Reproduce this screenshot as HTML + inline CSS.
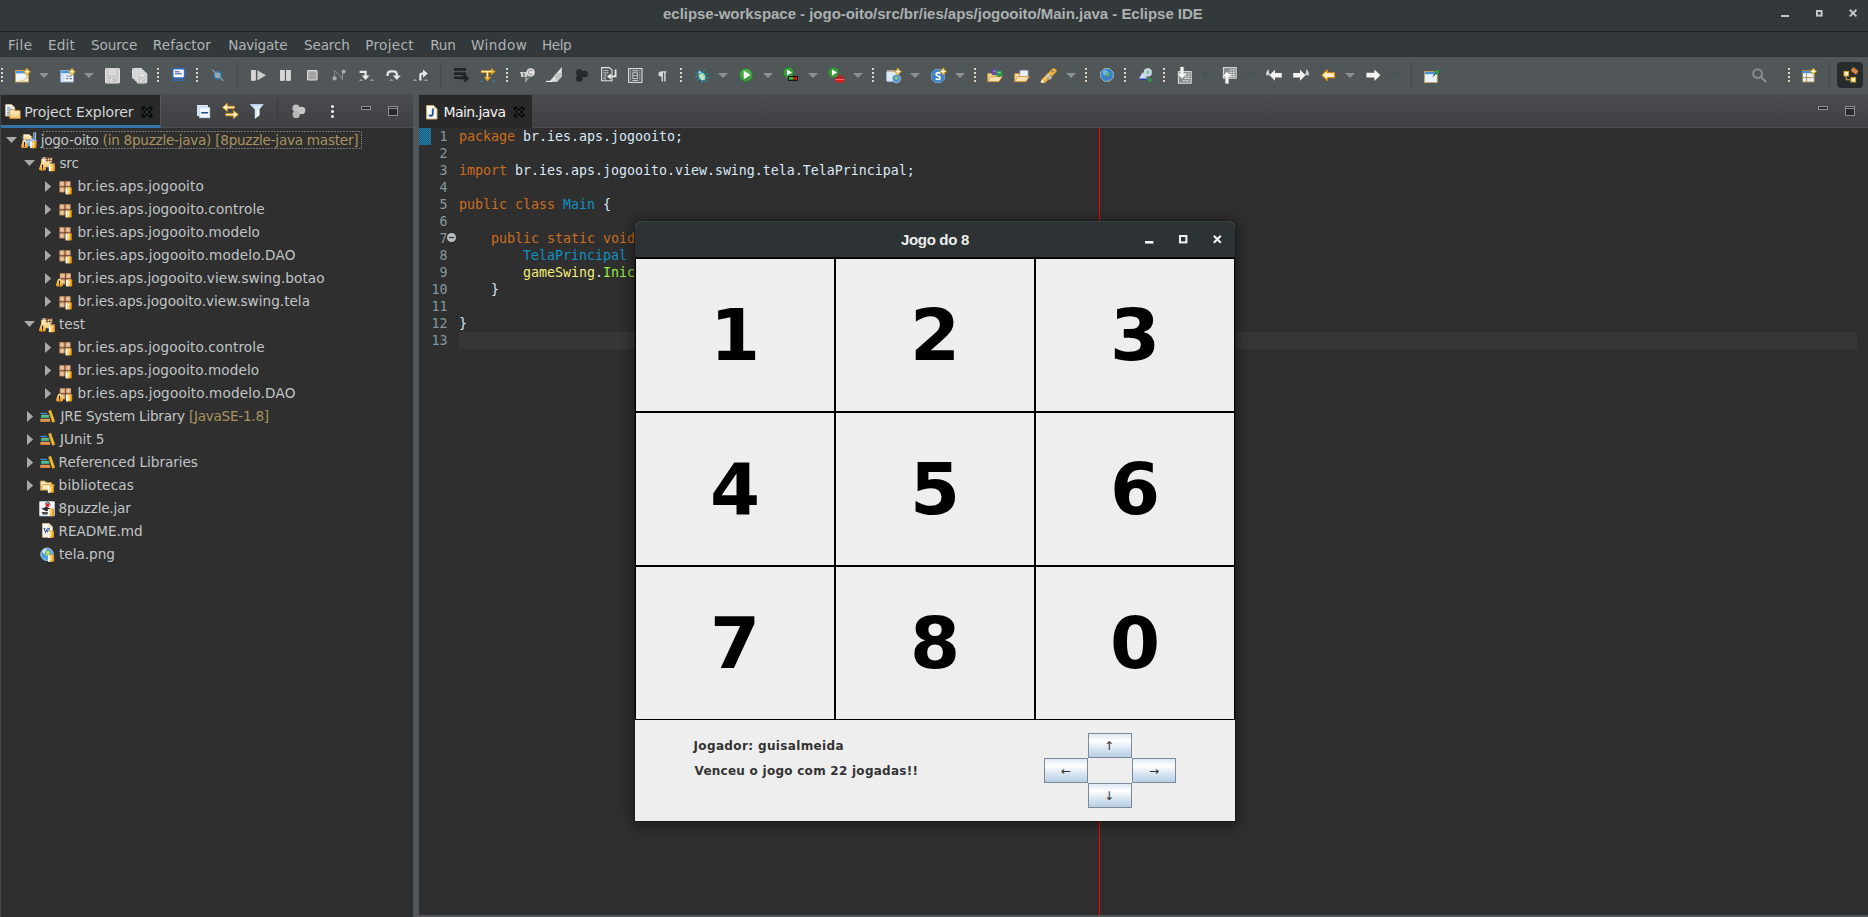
<!DOCTYPE html>
<html lang="pt-BR"><head><meta charset="utf-8">
<title>eclipse-workspace - jogo-oito/src/br/ies/aps/jogooito/Main.java - Eclipse IDE</title>
<style>
html,body{margin:0;padding:0}
body{width:1868px;height:917px;position:relative;overflow:hidden;background:#2f2f2f;font-family:"DejaVu Sans","Liberation Sans",sans-serif;font-size:13.6px;color:#c1c5c7}
div,span,svg,pre{position:absolute;box-sizing:border-box}
span.t{white-space:pre}
svg.ic{overflow:visible}
#titlebar{left:0;top:0;width:1868px;height:31px;background:#33383b}
#titlebar .title{top:0;height:29px;line-height:28px;font-family:"Liberation Sans","DejaVu Sans",sans-serif;font-weight:bold;font-size:15px;color:#abb0b0}
#tline{left:0;top:31px;width:1868px;height:1px;background:#1f2325}
#menubar{left:0;top:32px;width:1868px;height:25px;background:#33383b;border-bottom:1px solid #2f3437}
#menubar span{top:1px;height:25px;line-height:25px;color:#afb3b5;white-space:pre}
#toolbar{left:0;top:57px;width:1868px;height:38px;background:#515658}
#toolbar svg.ic{margin-top:-57px}
#left{left:0;top:95px;width:413px;height:822px;background:#2f2f2f}
#left .tabbar,#editor .tabbar{left:0;top:0;width:100%;height:32px;background:linear-gradient(#4a4c50,#3e4042)}
.tabline{left:0;top:32px;width:100%;height:1px;background:#4a4c4f}
.tab{top:0;height:33px;background:#292929}
.tab span{top:1px;line-height:32px;height:32px;white-space:pre}
#sash{left:413px;top:95px;width:6px;height:822px;background:#515658}
#editor{left:419px;top:95px;width:1449px;height:820px;background:#2f2f2f}
#ebottom{left:419px;top:915px;width:1449px;height:2px;background:#515658}
.row{left:0;width:413px;height:23px;line-height:23px}
.row span{top:0;height:23px;line-height:23px;white-space:pre;color:#c1c5c7}
.row span.d{color:#a8935f;position:static}
.code{left:40px;top:33px;font-family:"DejaVu Sans Mono","Liberation Mono",monospace;font-size:13.29px;line-height:17px;white-space:pre;color:#d9e8f7;margin:0}
.ln{left:0;top:33px;width:28.5px;text-align:right;font-family:"DejaVu Sans Mono","Liberation Mono",monospace;font-size:13.29px;line-height:17px;white-space:pre;color:#8497a1;margin:0}
.k{color:#cc6c1d;position:static}.c{color:#1290c3;position:static}.v{color:#f3ec79;position:static}.m{color:#96ec3f;position:static}
#game{left:635px;top:221px;width:600px;height:600px;background:#eeeeee;border-radius:7px 7px 0 0;box-shadow:0 2px 14px 3px rgba(0,0,0,.42),0 0 0 1px rgba(20,20,20,.35)}
#gtitle{left:0;top:0;width:600px;height:37px;background:#2d3235;border-radius:7px 7px 0 0;border-bottom:1px solid #0c0d0e;box-shadow:inset 0 1px 0 #3b4144}
#gtitle span{top:1px;height:36px;line-height:36px;font-family:"Liberation Sans","DejaVu Sans",sans-serif;font-weight:bold;font-size:15px;color:#eceeee}
.cell{width:200px;height:154px;border:1px solid #000;background:#eeeeee;color:#000;font-family:"DejaVu Sans",sans-serif;font-weight:bold;font-size:72px;text-align:center;line-height:152px}
.gl{font-family:"DejaVu Sans",sans-serif;font-weight:bold;font-size:12px;color:#333;white-space:pre;line-height:15px;height:15px}
.btn{width:44px;height:25px;border:1px solid #7a8a99;background:linear-gradient(#dde8f3 0%,#ffffff 30%,#dde8f3 60%,#b8cfe5 100%);font-family:"DejaVu Sans",sans-serif;font-weight:normal;font-size:12px;color:#333;text-align:center;line-height:23px}
</style></head><body>

<svg width="0" height="0" style="position:absolute;left:0;top:0"><defs><linearGradient id="gW" x1="0" y1="0" x2="0" y2="1"><stop offset="0" stop-color="#ffe999"/><stop offset="1" stop-color="#eb9a12"/></linearGradient><linearGradient id="gR" x1="0" y1="0" x2="1" y2="0"><stop offset="0" stop-color="#ffd257"/><stop offset="1" stop-color="#e48a00"/></linearGradient><radialGradient id="gP" cx=".5" cy=".5" r=".7"><stop offset="0" stop-color="#f6d9ad"/><stop offset="1" stop-color="#c5855a"/></radialGradient><linearGradient id="gF" x1="0" y1="0" x2="0" y2="1"><stop offset="0" stop-color="#fff4cf"/><stop offset="1" stop-color="#f1c970"/></linearGradient><linearGradient id="gB" x1="0" y1="0" x2="0" y2="1"><stop offset="0" stop-color="#bcd6f7"/><stop offset="1" stop-color="#5f8fdc"/></linearGradient></defs></svg>
<div id="titlebar"><span id="title" class="title t" style="left:663.0px;letter-spacing:-0.026px;">eclipse-workspace - jogo-oito/src/br/ies/aps/jogooito/Main.java - Eclipse IDE</span>
<svg class="ic" style="left:1781px;top:15px" width="8" height="2"><rect width="8" height="2" fill="#c3c6c7"/></svg>
<svg class="ic" style="left:1816px;top:10px" width="7" height="7"><rect x="1" y="1" width="4.6" height="4.6" fill="none" stroke="#c3c6c7" stroke-width="2"/></svg>
<svg class="ic" style="left:1849px;top:9px" width="8" height="8"><path d="M.8 .8L7.4 7.4M7.4 .8L.8 7.4" stroke="#c3c6c7" stroke-width="2"/></svg>
</div><div id="tline"></div>
<div id="menubar">
<span id="m_File" class="t" style="left:7.9px;letter-spacing:0.467px;">File</span>
<span id="m_Edit" class="t" style="left:48.0px;letter-spacing:0.2px;">Edit</span>
<span id="m_Source" class="t" style="left:91.0px;letter-spacing:-0.08px;">Source</span>
<span id="m_Refactor" class="t" style="left:152.8px;letter-spacing:0.143px;">Refactor</span>
<span id="m_Navigate" class="t" style="left:228.2px;letter-spacing:-0.229px;">Navigate</span>
<span id="m_Search" class="t" style="left:304.0px;letter-spacing:-0.16px;">Search</span>
<span id="m_Project" class="t" style="left:365.2px;letter-spacing:0.3px;">Project</span>
<span id="m_Run" class="t" style="left:430.2px;letter-spacing:-0.2px;">Run</span>
<span id="m_Window" class="t" style="left:471.0px;letter-spacing:0.44px;">Window</span>
<span id="m_Help" class="t" style="left:542.0px;letter-spacing:-0.467px;">Help</span>
</div>
<div id="toolbar">
<svg class="ic" style="left:1px;top:68px" width="2" height="14" viewBox="0 0 2 14"><rect x="0" y="0" width="2" height="2" fill="#ddd2c3"/><rect x="0" y="4" width="2" height="2" fill="#ddd2c3"/><rect x="0" y="8" width="2" height="2" fill="#ddd2c3"/><rect x="0" y="12" width="2" height="2" fill="#ddd2c3"/></svg><svg class="ic" style="left:15px;top:67.5px" width="16" height="16" viewBox="0 0 16 16"><rect x=".5" y="2.5" width="13" height="11.5" fill="#f0f6fd" stroke="#c8a24c"/><rect x="1" y="3" width="12" height="2.4" fill="#4a98e4"/><path d="M3 13.5C8 13.5 12 11 13 6.5" stroke="#e7cf8d" stroke-width="1.2" fill="none"/><path d="M12 0.0L13.7 2.0999999999999996L15.8 3.8L13.7 5.5L12 7.6L10.3 5.5L8.2 3.8L10.3 2.0999999999999996Z" fill="#d6a21c" stroke="#c08d12" stroke-width=".4"/><path d="M9.8 3.8H14.2M12 1.5999999999999996V6.0" stroke="#fffdf2" stroke-width="1.1" fill="none"/></svg><svg class="ic" style="left:39px;top:73px" width="10" height="5" viewBox="0 0 10 5"><path d="M0 0H10L5 5Z" fill="#8b9091"/></svg><svg class="ic" style="left:60px;top:67.5px" width="16" height="16" viewBox="0 0 16 16"><rect x=".5" y="2.5" width="13" height="11.5" fill="#f4f8fd" stroke="#8fa6c8"/><rect x="1" y="3" width="12" height="2.4" fill="#4a98e4"/><rect x="1" y="5.4" width="3.6" height="8.2" fill="#cfe2f7"/><path d="M6 8h6M6 10.6h2.4M9.6 10.6h2.4" stroke="#6a7fb2" stroke-width="1.1"/><path d="M12 0.0L13.7 2.0999999999999996L15.8 3.8L13.7 5.5L12 7.6L10.3 5.5L8.2 3.8L10.3 2.0999999999999996Z" fill="#d6a21c" stroke="#c08d12" stroke-width=".4"/><path d="M9.8 3.8H14.2M12 1.5999999999999996V6.0" stroke="#fffdf2" stroke-width="1.1" fill="none"/></svg><svg class="ic" style="left:84px;top:73px" width="10" height="5" viewBox="0 0 10 5"><path d="M0 0H10L5 5Z" fill="#8b9091"/></svg><svg class="ic" style="left:105px;top:68px" width="16" height="16" viewBox="0 0 16 16"><path d="M.5 1.2Q.5 .5 1.2 .5H13.8Q14.5 .5 14.5 1.2V14.3Q14.5 15 13.8 15H1.2Q.5 15 .5 14.3Z" fill="#cfcfcf" stroke="#e4e4e4"/><rect x="3.5" y="1" width="8" height="6" fill="#e6e6e6" stroke="#bdbdbd" stroke-width=".6"/><path d="M4.5 3h6M4.5 4.6h6" stroke="#c6c6c6" stroke-width=".7"/><rect x="4.5" y="10" width="6" height="5" fill="#dcdcdc" stroke="#b4b4b4" stroke-width=".6"/><rect x="7.8" y="11" width="1.6" height="3" fill="#b9b9b9"/></svg><svg class="ic" style="left:132px;top:68px" width="16" height="16" viewBox="0 0 16 16"><rect x=".5" y=".5" width="9.5" height="10" rx="1" fill="#cfcfcf" stroke="#e2e2e2"/><rect x="2.8" y="2.6" width="9.5" height="10" rx="1" fill="#cfcfcf" stroke="#e2e2e2"/><rect x="5" y="4.8" width="9.8" height="10.2" rx="1" fill="#cfcfcf" stroke="#e2e2e2"/><rect x="7" y="5.4" width="5.6" height="3.6" fill="#e4e4e4" stroke="#bdbdbd" stroke-width=".5"/><rect x="7.6" y="11" width="4.6" height="4" fill="#dcdcdc" stroke="#b4b4b4" stroke-width=".5"/><rect x="10" y="12" width="1.2" height="2.4" fill="#b9b9b9"/></svg><svg class="ic" style="left:157px;top:68px" width="2" height="14" viewBox="0 0 2 14"><rect x="0" y="0" width="2" height="2" fill="#ddd2c3"/><rect x="0" y="4" width="2" height="2" fill="#ddd2c3"/><rect x="0" y="8" width="2" height="2" fill="#ddd2c3"/><rect x="0" y="12" width="2" height="2" fill="#ddd2c3"/></svg><svg class="ic" style="left:172px;top:68px" width="14" height="14" viewBox="0 0 14 14"><rect x=".8" y=".8" width="11.8" height="9.2" rx="1.4" fill="#fbfcff" stroke="#2f6cc7" stroke-width="1.5"/><path d="M3 3.8h4.6M3 5.8h7" stroke="#31479c" stroke-width="1"/><path d="M3.5 10.4V12M9.8 10.4V12" stroke="#2f6cc7" stroke-width="1.4"/><path d="M1 12.3h11.4" stroke="#2f6cc7" stroke-width="1.1"/></svg><svg class="ic" style="left:196px;top:68px" width="2" height="14" viewBox="0 0 2 14"><rect x="0" y="0" width="2" height="2" fill="#ddd2c3"/><rect x="0" y="4" width="2" height="2" fill="#ddd2c3"/><rect x="0" y="8" width="2" height="2" fill="#ddd2c3"/><rect x="0" y="12" width="2" height="2" fill="#ddd2c3"/></svg><svg class="ic" style="left:211px;top:68px" width="14" height="14" viewBox="0 0 14 14"><circle cx="6.6" cy="7.3" r="3.5" fill="#9aa9b4" stroke="#2c7db9" stroke-width="1.5"/><path d="M1.2 1.6L12.4 12.8" stroke="#9b9fa1" stroke-width="1.1"/></svg><svg class="ic" style="left:237px;top:62px" width="1" height="26" viewBox="0 0 1 26"><rect width="1" height="26" fill="#44494b"/></svg><svg class="ic" style="left:251px;top:70px" width="15" height="11" viewBox="0 0 15 11"><rect x=".3" y=".3" width="4.2" height="10" fill="#d6d6d6" stroke="#e6e6e6" stroke-width=".6"/><path d="M6.4 .2L15 5.3L6.4 10.5Z" fill="#cdcdcd"/></svg><svg class="ic" style="left:280px;top:70px" width="11" height="11" viewBox="0 0 11 11"><rect x=".3" y=".3" width="4.2" height="10.2" fill="#d6d6d6" stroke="#e8e8e8" stroke-width=".6"/><rect x="6.3" y=".3" width="4.2" height="10.2" fill="#d6d6d6" stroke="#e8e8e8" stroke-width=".6"/></svg><svg class="ic" style="left:307px;top:70px" width="11" height="11" viewBox="0 0 11 11"><rect x=".6" y=".6" width="9.4" height="9.4" rx=".8" fill="#a4a4a4" stroke="#d9d9d9" stroke-width="1.2"/></svg><svg class="ic" style="left:332px;top:69px" width="14" height="12" viewBox="0 0 14 12"><path d="M2.5 1.5L8.5 7L10.5 10.5V3.5" stroke="#8f9495" stroke-width=".9" fill="none"/><path d="M2.6 2v6" stroke="#8f9495" stroke-width=".8"/><circle cx="2.6" cy="9.4" r="2.1" fill="#a6a9aa"/><circle cx="11.6" cy="2.6" r="2.1" fill="#a6a9aa"/></svg><svg class="ic" style="left:359px;top:69.7px" width="15" height="11" viewBox="0 0 15 11"><path d="M.6 1.8H6.6V6" stroke="#e6e6e6" stroke-width="2.2" fill="none"/><path d="M2.6 5.4H10.6L6.6 10Z" fill="#e6e6e6"/><path d="M0 10.6Q2 8.6 4 10.6ZM11 10.6Q13 8.6 15 10.6Z" fill="#d8d8d8"/></svg><svg class="ic" style="left:386px;top:69.7px" width="15" height="11" viewBox="0 0 15 11"><path d="M1.6 6V4.6Q1.6 1.4 5 1.4H7.4Q10.8 1.4 10.8 4.6V6" stroke="#e6e6e6" stroke-width="2.2" fill="none"/><path d="M6.8 5.4H14.8L10.8 10Z" fill="#e6e6e6"/><path d="M3.4 10.6Q5.4 8.6 7.4 10.6Z" fill="#d8d8d8"/></svg><svg class="ic" style="left:413px;top:69.7px" width="15" height="11" viewBox="0 0 15 11"><path d="M7.4 10.4V5Q7.4 3.6 8.8 3.6H10.6" stroke="#e6e6e6" stroke-width="2.2" fill="none"/><path d="M10 -.6V7.8L14.8 3.6Z" fill="#e6e6e6"/><path d="M0 10.6Q2 8.6 4 10.6ZM11 10.6Q13 8.6 15 10.6Z" fill="#d8d8d8"/></svg><svg class="ic" style="left:440px;top:62px" width="1" height="26" viewBox="0 0 1 26"><rect width="1" height="26" fill="#44494b"/></svg><svg class="ic" style="left:454px;top:68px" width="16" height="15" viewBox="0 0 16 15"><path d="M0 1.4H12M0 5.6H12M0 9.8H8" stroke="#1f2527" stroke-width="2.6"/><path d="M7 9L11 6L15 10.6L11 14.6L9.6 13L11.2 11.4H7Z" fill="#1f2527"/></svg><svg class="ic" style="left:480px;top:68px" width="16" height="14" viewBox="0 0 16 14"><path d="M1 3.6H12M7.4 4V11" stroke="#e6a21a" stroke-width="2.6" fill="none"/><path d="M11 0L15.6 3.6L11 7.2ZM3.8 9H11L7.4 13.4Z" fill="#e6a21a"/><path d="M1.6 3.6H12.4M7.4 4V10.6" stroke="#fff7e0" stroke-width=".9"/><path d="M0 14Q1.6 11.6 3.4 14ZM12 14Q13.8 11.6 15.6 14Z" fill="#4a79c4"/></svg><svg class="ic" style="left:506px;top:68px" width="2" height="14" viewBox="0 0 2 14"><rect x="0" y="0" width="2" height="2" fill="#ddd2c3"/><rect x="0" y="4" width="2" height="2" fill="#ddd2c3"/><rect x="0" y="8" width="2" height="2" fill="#ddd2c3"/><rect x="0" y="12" width="2" height="2" fill="#ddd2c3"/></svg><svg class="ic" style="left:520px;top:68px" width="15" height="15" viewBox="0 0 15 15"><path d="M0 4H7V9H1V5.4H0Z" fill="#cfcfcf"/><rect x="3" y="5" width="1.6" height="3.6" fill="#7c7c7c"/><circle cx="10.6" cy="4.4" r="4" fill="#e6e6e6" stroke="#c4c4c4" stroke-width=".6"/><path d="M12.2 3.2A2 2 0 1 0 12.2 5.6" stroke="#9a9a9a" stroke-width="1.1" fill="none"/><path d="M5 9.4H9.6L5 15Z" fill="#9b9b9b"/></svg><svg class="ic" style="left:546px;top:67px" width="16" height="15" viewBox="0 0 16 15"><path d="M0 14H4L15.8 0V9.6L11 14.8H0Z" fill="#e2e2e2"/><path d="M8 8L15.8 5V9.6L11 14.8Z" fill="#c4c4c4"/><path d="M0 14.4H6" stroke="#fafafa" stroke-width="1"/></svg><svg class="ic" style="left:575px;top:69px" width="13" height="13" viewBox="0 0 13 13"><circle cx="4.4" cy="3.6" r="3.3" fill="#23282a"/><circle cx="9.6" cy="5" r="3.3" fill="#23282a"/><circle cx="4.4" cy="9.4" r="3.4" fill="#23282a"/><path d="M2 3h4.6M7.4 4.4h4.4" stroke="#33393b" stroke-width=".8"/></svg><svg class="ic" style="left:601px;top:67px" width="16" height="15" viewBox="0 0 16 15"><path d="M.6 .6H8.4L11 3.2V13.8H.6Z" fill="none" stroke="#e2e2e2" stroke-width="1.1"/><path d="M2.4 3.6H7.4M2.4 5.8H7.4M2.4 8H6M2.4 10.2H5M2.4 12H5" stroke="#d2d2d2" stroke-width=".9"/><path d="M14.6 2.6V9.4H9" stroke="#e8e8e8" stroke-width="1.8" fill="none"/><path d="M9.8 6.4L6 9.4L9.8 12.4Z" fill="#e8e8e8"/></svg><svg class="ic" style="left:628px;top:68px" width="15" height="15" viewBox="0 0 15 15"><rect x=".6" y=".6" width="13.4" height="13.8" fill="none" stroke="#dcdcdc" stroke-width="1.1"/><path d="M2.6 2.4V12.8M11.8 2.4V12.8" stroke="#dcdcdc" stroke-width="1.1" stroke-dasharray="1 1"/><path d="M4.4 2.8H10M4.4 12.4H10" stroke="#d4d4d4" stroke-width="1"/><rect x="4.8" y="4.8" width="4.8" height="5.6" fill="none" stroke="#d4d4d4" stroke-width=".9"/><path d="M5 7.6H9.4" stroke="#d4d4d4" stroke-width=".8"/></svg><svg class="ic" style="left:658px;top:71px" width="9" height="11" viewBox="0 0 9 11"><path d="M4.2 .2H8.4V1.4H7.6V10.4H6.2V1.4H5V10.4H3.6V5.6Q.4 5.6 .4 2.9Q.4 .2 4.2 .2Z" fill="#d9d9d9"/></svg><svg class="ic" style="left:680px;top:68px" width="2" height="14" viewBox="0 0 2 14"><rect x="0" y="0" width="2" height="2" fill="#ddd2c3"/><rect x="0" y="4" width="2" height="2" fill="#ddd2c3"/><rect x="0" y="8" width="2" height="2" fill="#ddd2c3"/><rect x="0" y="12" width="2" height="2" fill="#ddd2c3"/></svg><svg class="ic" style="left:694px;top:67.5px" width="16" height="16" viewBox="0 0 16 16"><path d="M4 1L6 4M11 .6L9.4 3.6M1 4.4L4.6 6M.8 8.6L4.4 8.6M2.6 13L5.4 10.6M14.8 5.4L11.4 7M15.4 10L11.8 9.6M13.4 14.6L10.6 11.6M8 15.4L8 12.6" stroke="#2a9d8c" stroke-width=".9"/><ellipse cx="8" cy="8.4" rx="3.6" ry="4.6" transform="rotate(-28 8 8.4)" fill="#a9d7a3" stroke="#1a7fa8" stroke-width="1.1"/><circle cx="5.6" cy="4.2" r="1.5" fill="#d9ecf2" stroke="#1a7fa8" stroke-width=".8"/><path d="M7 6.4L10.4 11.4M6 8L9 12" stroke="#e3f3df" stroke-width=".8"/></svg><svg class="ic" style="left:718px;top:73px" width="10" height="5" viewBox="0 0 10 5"><path d="M0 0H10L5 5Z" fill="#8b9091"/></svg><svg class="ic" style="left:739px;top:68px" width="14" height="14" viewBox="0 0 14 14"><circle cx="7" cy="7" r="6.6" fill="#3f9c3d" stroke="#1f7a2c" stroke-width=".8"/><circle cx="7" cy="5.6" r="4.6" fill="#64b55b" opacity=".6"/><path d="M4.8 2.8L11.4 7L4.8 11.2Z" fill="#ffffff"/></svg><svg class="ic" style="left:763px;top:73px" width="10" height="5" viewBox="0 0 10 5"><path d="M0 0H10L5 5Z" fill="#8b9091"/></svg><svg class="ic" style="left:783px;top:67px" width="16" height="15" viewBox="0 0 16 15"><circle cx="5.6" cy="5.5" r="5.2" fill="#3f9c3d" stroke="#1f7a2c" stroke-width=".7"/><path d="M4 2.6L9 5.6L4 8.6Z" fill="#fff"/><rect x="5" y="9" width="10" height="4.8" fill="#050505"/><rect x="6" y="10" width="4" height="2.8" fill="#12c828"/><rect x="10" y="10" width="4" height="2.8" fill="#e01818"/></svg><svg class="ic" style="left:808px;top:73px" width="10" height="5" viewBox="0 0 10 5"><path d="M0 0H10L5 5Z" fill="#8b9091"/></svg><svg class="ic" style="left:828px;top:67px" width="17" height="16" viewBox="0 0 17 16"><circle cx="5.6" cy="5.5" r="5.2" fill="#3f9c3d" stroke="#1f7a2c" stroke-width=".7"/><path d="M4 2.6L9 5.6L4 8.6Z" fill="#fff"/><rect x="7.4" y="10.4" width="8.8" height="5" fill="#d81616"/><path d="M9.8 10.4V8.8H13.8V10.4" stroke="#d81616" stroke-width="1.1" fill="none"/><path d="M7.4 12.6H16.2" stroke="#f3a0a0" stroke-width=".7"/></svg><svg class="ic" style="left:853px;top:73px" width="10" height="5" viewBox="0 0 10 5"><path d="M0 0H10L5 5Z" fill="#8b9091"/></svg><svg class="ic" style="left:872px;top:68px" width="2" height="14" viewBox="0 0 2 14"><rect x="0" y="0" width="2" height="2" fill="#ddd2c3"/><rect x="0" y="4" width="2" height="2" fill="#ddd2c3"/><rect x="0" y="8" width="2" height="2" fill="#ddd2c3"/><rect x="0" y="12" width="2" height="2" fill="#ddd2c3"/></svg><svg class="ic" style="left:886px;top:67.5px" width="16" height="16" viewBox="0 0 16 16"><path d="M1 2.2H8.4L9.4 3.4H1Z" fill="#e8c35c"/><rect x=".6" y="3.4" width="12" height="10" rx="1" fill="#dfe9f6" stroke="#a9bcd8" stroke-width=".8"/><circle cx="10.4" cy="10.6" r="4.2" fill="#4a8fd8" stroke="#d8d8f0" stroke-width=".7"/><path d="M8.6 9.4Q10.4 7 12 9.6Q11.6 12.6 9.8 12.6Z" fill="#8ccf6a"/><path d="M12 -0.19999999999999973L13.7 1.9000000000000001L15.8 3.6L13.7 5.3L12 7.4L10.3 5.3L8.2 3.6L10.3 1.9000000000000001Z" fill="#d6a21c" stroke="#c08d12" stroke-width=".4"/><path d="M9.8 3.6H14.2M12 1.4V5.800000000000001" stroke="#fffdf2" stroke-width="1.1" fill="none"/></svg><svg class="ic" style="left:910px;top:73px" width="10" height="5" viewBox="0 0 10 5"><path d="M0 0H10L5 5Z" fill="#8b9091"/></svg><svg class="ic" style="left:931px;top:67.5px" width="16" height="16" viewBox="0 0 16 16"><path d="M4 1.4H10L13.6 5V11L10 14.6H4L.6 11V5Z" fill="#3f82c8" stroke="#7fb0e2" stroke-width=".7"/><path d="M9.6 5.2Q6.8 3.8 5.4 5.4Q4.4 7.2 7.2 8Q10 9 8.8 10.8Q7.4 12.2 4.6 10.8" stroke="#fff" stroke-width="1.7" fill="none"/><path d="M12.2 -0.3999999999999999L13.899999999999999 1.7L16.0 3.4L13.899999999999999 5.1L12.2 7.199999999999999L10.5 5.1L8.399999999999999 3.4L10.5 1.7Z" fill="#d6a21c" stroke="#c08d12" stroke-width=".4"/><path d="M10.0 3.4H14.399999999999999M12.2 1.1999999999999997V5.6" stroke="#fffdf2" stroke-width="1.1" fill="none"/></svg><svg class="ic" style="left:955px;top:73px" width="10" height="5" viewBox="0 0 10 5"><path d="M0 0H10L5 5Z" fill="#8b9091"/></svg><svg class="ic" style="left:974px;top:68px" width="2" height="14" viewBox="0 0 2 14"><rect x="0" y="0" width="2" height="2" fill="#ddd2c3"/><rect x="0" y="4" width="2" height="2" fill="#ddd2c3"/><rect x="0" y="8" width="2" height="2" fill="#ddd2c3"/><rect x="0" y="12" width="2" height="2" fill="#ddd2c3"/></svg><svg class="ic" style="left:987px;top:68px" width="16" height="15" viewBox="0 0 16 15"><path d="M.6 5.4H5L6 6.6H12V13.6H.6Z" fill="#f3d89a" stroke="#c98d35" stroke-width=".8"/><path d="M.6 13.6L3.6 8.6H15.4L12 13.6Z" fill="#f8e2ae" stroke="#c98d35" stroke-width=".8"/><circle cx="7.6" cy="4" r="3.3" fill="#6747a6"/><path d="M5.8 3.4Q7.6 1.4 9.4 3.4Z" fill="#b9a7de"/><circle cx="12.2" cy="5.6" r="3.3" fill="#2c9a52"/><path d="M10.4 5Q12.2 3 14 5Z" fill="#a5dcb4"/></svg><svg class="ic" style="left:1014px;top:68px" width="16" height="15" viewBox="0 0 16 15"><path d="M.6 5.4H5L6 6.6H12V13.6H.6Z" fill="#f3d89a" stroke="#c98d35" stroke-width=".8"/><rect x="6" y="2.6" width="8" height="6" fill="#e9f0fa" stroke="#9fb0cc" stroke-width=".7"/><path d="M8.4 2.6Q10 .4 11.6 2.6Z" fill="#9aa4b8"/><path d="M.6 13.6L3.6 8.6H15.4L12 13.6Z" fill="#f8e2ae" stroke="#c98d35" stroke-width=".8"/></svg><svg class="ic" style="left:1040px;top:67.5px" width="17" height="16" viewBox="0 0 17 16"><path d="M.8 14.6L2 11L12.6 .8Q14.6 -.2 16.2 1.8Q16.8 3.4 15.6 4.6L5.4 14.4Z" fill="#f1b43a" stroke="#c98318" stroke-width=".7"/><path d="M.8 14.8L2 11.2L5.2 14.4Z" fill="#fffbe8"/><path d="M5 8L9.4 12.2L12.4 9.4L8 5.2Z" fill="#b9b4b0"/><path d="M2.2 11L5.4 14.2M4.8 8.2L9.2 12.4M8.2 5L12.6 9.2" stroke="#b97a28" stroke-width=".7"/><circle cx="12.6" cy="3.6" r=".8" fill="#3a5fb4"/><path d="M1.6 13.8L3.2 12.2L10 5.4" stroke="#fff3c4" stroke-width="1" fill="none"/></svg><svg class="ic" style="left:1066px;top:73px" width="10" height="5" viewBox="0 0 10 5"><path d="M0 0H10L5 5Z" fill="#8b9091"/></svg><svg class="ic" style="left:1085px;top:68px" width="2" height="14" viewBox="0 0 2 14"><rect x="0" y="0" width="2" height="2" fill="#ddd2c3"/><rect x="0" y="4" width="2" height="2" fill="#ddd2c3"/><rect x="0" y="8" width="2" height="2" fill="#ddd2c3"/><rect x="0" y="12" width="2" height="2" fill="#ddd2c3"/></svg><svg class="ic" style="left:1100px;top:68px" width="14" height="14" viewBox="0 0 14 14"><path d="M4.2 .6H9.6L13.2 4.2V9.6L9.6 13.2H4.2L.6 9.6V4.2Z" fill="#2f86d8" stroke="#d9cf9c" stroke-width=".7"/><circle cx="5.4" cy="4.6" r="2.6" fill="#8cc4f2" opacity=".8"/><path d="M5 2.6Q7 4 6.8 6.4L8.4 4.2L9.8 5.4L8 8.8H6.2L5.8 6Z" fill="#5fb04e"/><circle cx="6.8" cy="9.8" r=".8" fill="#e02020"/></svg><svg class="ic" style="left:1124px;top:68px" width="2" height="14" viewBox="0 0 2 14"><rect x="0" y="0" width="2" height="2" fill="#ddd2c3"/><rect x="0" y="4" width="2" height="2" fill="#ddd2c3"/><rect x="0" y="8" width="2" height="2" fill="#ddd2c3"/><rect x="0" y="12" width="2" height="2" fill="#ddd2c3"/></svg><svg class="ic" style="left:1138px;top:68px" width="16" height="16" viewBox="0 0 16 16"><path d="M.6 11.6L4.6 4.2L7.6 7.4L9.2 11.6Z" fill="#cfdcf2"/><path d="M.4 12H9.6L8 10.4H1.6Z" fill="#2a3a9c"/><circle cx="9.8" cy="4.4" r="3.9" fill="#b9d9ef" stroke="#e4e4e4" stroke-width=".6"/><path d="M8.6 3.4Q10 2 11.4 4Q10.8 6 9.4 6Z" fill="#7dbb5c"/><path d="M9 8.6L14.8 12L12.4 12.6L11.6 15.4Z" fill="#2f9a48"/><path d="M12 11L15.4 12.6L13 13.6Z" fill="#2f9a48"/></svg><svg class="ic" style="left:1163px;top:68px" width="2" height="14" viewBox="0 0 2 14"><rect x="0" y="0" width="2" height="2" fill="#ddd2c3"/><rect x="0" y="4" width="2" height="2" fill="#ddd2c3"/><rect x="0" y="8" width="2" height="2" fill="#ddd2c3"/><rect x="0" y="12" width="2" height="2" fill="#ddd2c3"/></svg><svg class="ic" style="left:1177px;top:66.5px" width="15" height="17" viewBox="0 0 15 17"><rect x="1.4" y="4.6" width="12.8" height="11.6" fill="#858a8b" stroke="#dedede" stroke-width="1"/><path d="M7.6 7H12.6M7.6 9.2H12.6M7.6 11.4H12.6M6 13.8H12.6" stroke="#f4f4f4" stroke-width="1.1" stroke-dasharray="2.2 .8"/><path d="M3.4 0H6.6V6.6H9.4L5 11.8L.6 6.6H3.4Z" fill="#f6f6f6" stroke="#c8c8c8" stroke-width=".4"/></svg><svg class="ic" style="left:1201px;top:73px" width="10" height="5" viewBox="0 0 10 5"><path d="M0 0H10L5 5Z" fill="#495355"/></svg><svg class="ic" style="left:1222px;top:66.5px" width="15" height="17" viewBox="0 0 15 17"><rect x="1.4" y=".6" width="12.8" height="10.6" fill="#858a8b" stroke="#dedede" stroke-width="1"/><path d="M7.6 3H12.6M7.6 5.2H12.6M7.6 7.4H12.6M7.6 9.4H12.6" stroke="#f4f4f4" stroke-width="1.1" stroke-dasharray="2.2 .8"/><path d="M3.4 16.6H6.6V9.8H9.4L5 4.6L.6 9.8H3.4Z" fill="#f6f6f6" stroke="#c8c8c8" stroke-width=".4"/></svg><svg class="ic" style="left:1246px;top:73px" width="10" height="5" viewBox="0 0 10 5"><path d="M0 0H10L5 5Z" fill="#495355"/></svg><svg class="ic" style="left:1266px;top:68.5px" width="16" height="13" viewBox="0 0 16 13"><path d="M.2 6.4Q-.4 1.8 3 .2Q2 3.2 4.2 6Z" fill="#cfcfcf"/><path d="M3.4 6.2L9 .8V4H15.8V8.4H9V11.8Z" fill="#f2f2f2"/></svg><svg class="ic" style="left:1293px;top:68.5px" width="16" height="13" viewBox="0 0 16 13"><path d="M15.8 6.4Q16.4 1.8 13 .2Q14 3.2 11.8 6Z" fill="#cfcfcf"/><path d="M12.6 6.2L7 .8V4H.2V8.4H7V11.8Z" fill="#f2f2f2"/></svg><svg class="ic" style="left:1321px;top:68.5px" width="15" height="13" viewBox="0 0 15 13"><path d="M.8 6.2L6.4 .8V3.8H13.6V8.6H6.4V11.6Z" fill="#fff1c9" stroke="#d98c0c" stroke-width="1.1" stroke-linejoin="round"/></svg><svg class="ic" style="left:1345px;top:73px" width="10" height="5" viewBox="0 0 10 5"><path d="M0 0H10L5 5Z" fill="#8b9091"/></svg><svg class="ic" style="left:1366px;top:68.5px" width="15" height="13" viewBox="0 0 15 13"><path d="M14.4 6.2L8.4 .4V3.8H.4V8.6H8.4V12Z" fill="#f4f4f4"/></svg><svg class="ic" style="left:1390px;top:73px" width="10" height="5" viewBox="0 0 10 5"><path d="M0 0H10L5 5Z" fill="#495355"/></svg><svg class="ic" style="left:1411px;top:62px" width="1" height="26" viewBox="0 0 1 26"><rect width="1" height="26" fill="#44494b"/></svg><svg class="ic" style="left:1424px;top:68.5px" width="16" height="14" viewBox="0 0 16 14"><rect x=".6" y="2.6" width="12.6" height="11" fill="#e6f2fc" stroke="#c7a563" stroke-width=".9"/><rect x="1" y="3" width="11.8" height="2.2" fill="#4a8fda"/><path d="M9 7.4L11.4 4.6" stroke="#111" stroke-width="1"/><path d="M10.4 3L13.2 .2L15.8 2.6L13 5.4Z" fill="#2fa043" stroke="#1d7d31" stroke-width=".6"/></svg><svg class="ic" style="left:1752px;top:68px" width="15" height="15" viewBox="0 0 15 15"><circle cx="5.6" cy="5.6" r="4.4" fill="none" stroke="#8c8c8c" stroke-width="1.9"/><path d="M8.8 8.8L14.2 14.2" stroke="#8c8c8c" stroke-width="2.1"/></svg><svg class="ic" style="left:1788px;top:68px" width="2" height="14" viewBox="0 0 2 14"><rect x="0" y="0" width="2" height="2" fill="#ddd2c3"/><rect x="0" y="4" width="2" height="2" fill="#ddd2c3"/><rect x="0" y="8" width="2" height="2" fill="#ddd2c3"/><rect x="0" y="12" width="2" height="2" fill="#ddd2c3"/></svg><svg class="ic" style="left:1802px;top:68px" width="15" height="15" viewBox="0 0 15 15"><rect x=".6" y="2.6" width="11.6" height="11.4" fill="#e9f3fc" stroke="#a8894a" stroke-width=".9"/><rect x="1" y="3" width="10.8" height="2.2" fill="#4a90da"/><path d="M4.6 5.2V13.8M1 9.6H12" stroke="#a8894a" stroke-width=".9"/><path d="M6.4 12.6L11 8.4" stroke="#ecd9a6" stroke-width=".8"/><path d="M11.4 0.0L13.1 1.7L14.8 3.4L13.1 5.1L11.4 6.8L9.700000000000001 5.1L8.0 3.4L9.700000000000001 1.7Z" fill="#d6a21c" stroke="#c08d12" stroke-width=".4"/><path d="M9.2 3.4H13.600000000000001M11.4 1.1999999999999997V5.6" stroke="#fffdf2" stroke-width="1.1" fill="none"/></svg><svg class="ic" style="left:1829px;top:62px" width="1" height="26" viewBox="0 0 1 26"><rect width="1" height="26" fill="#44494b"/></svg>
<div style="left:1837px;top:5px;width:26px;height:26px;border-radius:4px;background:#262b2d"></div>
<svg class="ic" style="left:1843px;top:67px" width="16" height="16" viewBox="0 0 16 16"><rect x="1" y="4.4" width="4.6" height="4.6" fill="#fdf3c4" stroke="#d9a520" stroke-width="1"/><rect x="8" y="10.4" width="4.6" height="4.6" fill="#fdf3c4" stroke="#d9a520" stroke-width="1"/><path d="M3.2 9.4V12.8H7.6" stroke="#e0b648" stroke-width="1" fill="none"/><g transform="rotate(38 11.6 3.8)"><rect x="8.2" y="1.4" width="7" height="5" rx="1.2" fill="#b9692d"/><path d="M8.6 3H14.8M8.6 4.6H14.8" stroke="#f0c090" stroke-width=".7"/></g></svg>
</div>
<div style="left:0;top:94px;width:413px;height:1px;background:#4b4d51"></div><div style="left:419px;top:94px;width:1449px;height:1px;background:#4b4d51"></div>
<div id="left"><div class="tabbar"></div><div class="tabline"></div>
<div style="left:0;top:0;width:1px;height:822px;background:#44474a"></div>
<div style="left:160px;top:0;width:1px;height:32px;background:#56595c"></div><div class="tab" style="left:1px;width:159px"><svg class="ic" style="left:3.6px;top:8.6px" width="16" height="16" viewBox="0 0 16 16"><path d="M.6 .5H6.6L9.8 3.6V12H.6Z" fill="#fbfcfe" stroke="#cdb883" stroke-width=".9"/><path d="M6.6 .5V3.6H9.8Z" fill="#e9d9a6"/><path d="M2 3.2H5M2 5H6.6M2 6.8H5.4M2 8.6H4.4M2 10.4H4" stroke="#4f7fd0" stroke-width=".9"/><path d="M4.8 14.4V6.6Q4.8 5.6 5.8 5.6H8.2Q9 5.6 9.4 6.6H14.4Q15.2 6.6 15.2 7.4V14.4Z" fill="url(#gF)" stroke="#d68b2c" stroke-width=".9"/></svg><span id="tabpe" class="t" style="left:23.2px;letter-spacing:-0.08px;color:#d3d6d8;font-size:14px">Project Explorer</span><svg class="ic" style="left:141px;top:12px" width="10" height="10" viewBox="0 0 10 10"><path d="M1.6 1.6L8.4 8.4M8.4 1.6L1.6 8.4" stroke="#020202" stroke-width="3.7" stroke-linecap="square"/><path d="M1.8 1.8L8.2 8.2M8.2 1.8L1.8 8.2" stroke="#283033" stroke-width="1.5" stroke-linecap="square"/></svg></div>
<div style="left:1px;top:30px;width:159px;height:3px;background:#3573a8"></div>
<svg class="ic" style="left:196.7px;top:9.8px" width="14" height="14" viewBox="0 0 14 14"><rect x=".5" y=".5" width="10" height="10" fill="#c4dcf6" stroke="#e2eefb" stroke-width=".9"/><rect x="2.7" y="2.7" width="10" height="10" fill="#f1f7fe" stroke="#cfdff3" stroke-width=".9"/><path d="M4.2 7.8H11.2" stroke="#0c3f82" stroke-width="1.4"/></svg><svg class="ic" style="left:221.8px;top:7.8px" width="17" height="16" viewBox="0 0 17 16"><path d="M.5 4.4L5.4 .3V3.2H12.4V5.6H5.4V8.5Z" fill="#fff3cc" stroke="#d9920f" stroke-width=".9" stroke-linejoin="round"/><path d="M16.3 11.6L11.4 7.5V10.4H3.8V12.8H11.4V15.7Z" fill="#fff3cc" stroke="#d9920f" stroke-width=".9" stroke-linejoin="round"/></svg><svg class="ic" style="left:249.7px;top:8.9px" width="14" height="15" viewBox="0 0 14 15"><path d="M0 .2H13.6L9.4 5.6V11.2L4.8 14.9V5.6Z" fill="#d7e6fa"/><path d="M0 .2H13.6L12.4 1.8H1.2Z" fill="#bcd4f3"/><path d="M7 5.6H9.4V11.2L7 13.2Z" fill="#f6faff"/></svg><div style="left:277px;top:3px;width:1px;height:26px;background:#3a3c3e"></div><svg class="ic" style="left:291px;top:9px" width="15" height="15" viewBox="0 0 15 15"><circle cx="5" cy="4.2" r="3.6" fill="#c2c2c2"/><circle cx="10.6" cy="6.4" r="3.7" fill="#cbcbcb"/><circle cx="5.2" cy="10.4" r="3.6" fill="#b9b9b9"/><path d="M2.6 3.4H7.4M8.2 5.6H13M2.8 9.6H7.6M2.8 11.4H7.6M8.2 7.4H13M2.6 5.2H7.4" stroke="#a9a9a9" stroke-width=".6" stroke-dasharray=".8 .8"/></svg><svg class="ic" style="left:330.5px;top:10px" width="3" height="13" viewBox="0 0 3 13"><circle cx="1.5" cy="1.5" r="1.5" fill="#f1f1f1"/><circle cx="1.5" cy="6.5" r="1.5" fill="#f1f1f1"/><circle cx="1.5" cy="11.5" r="1.5" fill="#f1f1f1"/></svg><svg class="ic" style="left:361px;top:11px" width="10" height="4" viewBox="0 0 10 4"><rect x=".5" y=".5" width="9" height="3" fill="#262a2c" stroke="#8f8f8f" stroke-width="1"/></svg><svg class="ic" style="left:388px;top:11px" width="10" height="10" viewBox="0 0 10 10"><rect x=".5" y=".5" width="9" height="9" fill="#262a2c" stroke="#8f8f8f" stroke-width="1"/><path d="M1 2.5H9" stroke="#8f8f8f" stroke-width="1"/></svg>
<div class="row" style="top:33.5px"><svg class="ic" style="left:6px;top:8.5px" width="11" height="6"><path d="M0 0H11L5.5 6Z" fill="#a9a9a9"/></svg><svg class="ic" style="left:21px;top:3.4px" width="17" height="17" viewBox="0 0 17 17"><path d="M2.4 2.6H8.6L9.4 4H10.4V8.4H2.4Z" fill="url(#gF)" stroke="#e9c988" stroke-width=".5"/><path d="M3.6 3.4H7.6" stroke="#fffbe8" stroke-width="1"/><path d="M1 4.6L2 6.6" stroke="#9a8ab8" stroke-width=".8"/><path d="M1.4 8H16L15 14.6H2.6Z" fill="url(#gB)" stroke="#3558b8" stroke-width=".6"/><path d="M13.8 .6V5.2Q13.8 7.2 12 7.2Q11 7.2 10.4 6.4" stroke="#fff" stroke-width="2.6" fill="none"/><path d="M13.8 .8V5.2Q13.8 7 12 7Q11.2 7 10.6 6.4" stroke="#2f74b8" stroke-width="1.4" fill="none"/><path d="M3.5 7.800000000000001Q4.8 7.800000000000001 5.4 9.600000000000001L6.9 14.0Q7.3 16.0 5.6 16.0H1.4Q-0.3 16.0 0.1 14.0L1.6 9.600000000000001Q2.2 7.800000000000001 3.5 7.800000000000001Z" fill="url(#gW)"/><rect x="3" y="10.0" width="1" height="3.2" fill="#1a1000"/><rect x="3" y="13.8" width="1" height="1.1" fill="#1a1000"/><rect x="9.2" y="9.6" width="2.4" height="6.6" fill="#ffffff"/><rect x="10.799999999999999" y="9" width="4.6" height="7.2" rx="1" fill="url(#gR)"/><rect x="11.799999999999999" y="10.6" width="2" height="1" fill="#fff3cf"/><rect x="11.799999999999999" y="11.6" width="1" height="3" fill="#fff3cf"/></svg><span id="r0" class="t" style="left:40.7px;letter-spacing:-0.262px;">jogo-oito <span class="d">(in 8puzzle-java) [8puzzle-java master]</span></span><div style="left:43px;top:2px;width:319px;height:1px;background:repeating-linear-gradient(90deg,#747474 0 2px,transparent 2px 3px)"></div><div style="left:43px;top:19px;width:319px;height:1px;background:repeating-linear-gradient(90deg,#747474 0 2px,transparent 2px 3px)"></div><div style="left:43px;top:2px;width:1px;height:18px;background:repeating-linear-gradient(#6a6a6a 0 1px,transparent 1px 2px)"></div><div style="left:361px;top:2px;width:1px;height:18px;background:repeating-linear-gradient(#8a8a8a 0 1px,transparent 1px 2px)"></div></div>
<div class="row" style="top:56.5px"><svg class="ic" style="left:24px;top:8.5px" width="11" height="6"><path d="M0 0H11L5.5 6Z" fill="#a9a9a9"/></svg><svg class="ic" style="left:38.6px;top:4.6px" width="17" height="15" viewBox="0 0 17 15"><path d="M2.4 3H7.4L8.2 4.2H11.4V11H2.4Z" fill="url(#gF)" stroke="#e2bd78" stroke-width=".5"/><path d="M3.4 2H7" stroke="#fff3cf" stroke-width="1.2"/><path d="M6.6 1.8H14.4M6.6 4.4H14.4M8.2 0V6.2M10.8 0V6.2M13.4 .4V6.2" stroke="#6e3f2a" stroke-width=".8"/><rect x="8.6" y="2.2" width="1.8" height="1.8" fill="#f3d9a8"/><rect x="11.2" y="2.2" width="1.8" height="1.8" fill="#f3d9a8"/><rect x="8.6" y="4.8" width="1.8" height="1.4" fill="#f3d9a8"/><rect x="11.2" y="4.8" width="1.8" height="1.4" fill="#f3d9a8"/><path d="M9 7.4H16L14.6 9H9Z" fill="#f6d58c"/><path d="M3.5 6.4Q4.8 6.4 5.4 8.200000000000001L6.9 12.600000000000001Q7.3 14.6 5.6 14.6H1.4Q-0.3 14.6 0.1 12.600000000000001L1.6 8.200000000000001Q2.2 6.4 3.5 6.4Z" fill="url(#gW)"/><rect x="3" y="8.600000000000001" width="1" height="3.2" fill="#1a1000"/><rect x="3" y="12.4" width="1" height="1.1" fill="#1a1000"/><rect x="9.8" y="8.6" width="2.4" height="6.6" fill="#ffffff"/><rect x="11.4" y="8" width="4.6" height="7.2" rx="1" fill="url(#gR)"/><rect x="12.4" y="9.6" width="2" height="1" fill="#fff3cf"/><rect x="12.4" y="10.6" width="1" height="3" fill="#fff3cf"/></svg><span id="r1" class="t" style="left:59.4px;letter-spacing:-0.1px;">src</span></div>
<div class="row" style="top:79.5px"><svg class="ic" style="left:44.8px;top:6px" width="7" height="11"><path d="M0 0L6.2 5.5L0 11Z" fill="#a9a9a9"/></svg><svg class="ic" style="left:59.4px;top:6px" width="16" height="16" viewBox="0 0 16 16"><path d="M6.0 -.4V12.2M-0.19999999999999996 5.8H12.200000000000001" stroke="#6e4030" stroke-width=".9"/><rect x="0.4" y=".2" width="5.2" height="5.2" fill="url(#gP)"/><rect x="6.4" y=".2" width="5.2" height="5.2" fill="url(#gP)"/><rect x="0.4" y="6.2" width="5.2" height="5.2" fill="url(#gP)"/><rect x="6.4" y="6.2" width="5.2" height="5.2" fill="url(#gP)"/><rect x="6.6" y="6.8" width="2.4" height="6.6" fill="#ffffff"/><rect x="8.2" y="6.2" width="4.6" height="7.2" rx="1" fill="url(#gR)"/><rect x="9.2" y="7.800000000000001" width="2" height="1" fill="#fff3cf"/><rect x="9.2" y="8.8" width="1" height="3" fill="#fff3cf"/></svg><span id="r2" class="t" style="left:77.6px;letter-spacing:0.122px;">br.ies.aps.jogooito</span></div>
<div class="row" style="top:102.5px"><svg class="ic" style="left:44.8px;top:6px" width="7" height="11"><path d="M0 0L6.2 5.5L0 11Z" fill="#a9a9a9"/></svg><svg class="ic" style="left:59.4px;top:6px" width="16" height="16" viewBox="0 0 16 16"><path d="M6.0 -.4V12.2M-0.19999999999999996 5.8H12.200000000000001" stroke="#6e4030" stroke-width=".9"/><rect x="0.4" y=".2" width="5.2" height="5.2" fill="url(#gP)"/><rect x="6.4" y=".2" width="5.2" height="5.2" fill="url(#gP)"/><rect x="0.4" y="6.2" width="5.2" height="5.2" fill="url(#gP)"/><rect x="6.4" y="6.2" width="5.2" height="5.2" fill="url(#gP)"/><rect x="6.6" y="6.8" width="2.4" height="6.6" fill="#ffffff"/><rect x="8.2" y="6.2" width="4.6" height="7.2" rx="1" fill="url(#gR)"/><rect x="9.2" y="7.800000000000001" width="2" height="1" fill="#fff3cf"/><rect x="9.2" y="8.8" width="1" height="3" fill="#fff3cf"/></svg><span id="r3" class="t" style="left:77.6px;letter-spacing:0.133px;">br.ies.aps.jogooito.controle</span></div>
<div class="row" style="top:125.5px"><svg class="ic" style="left:44.8px;top:6px" width="7" height="11"><path d="M0 0L6.2 5.5L0 11Z" fill="#a9a9a9"/></svg><svg class="ic" style="left:59.4px;top:6px" width="16" height="16" viewBox="0 0 16 16"><path d="M6.0 -.4V12.2M-0.19999999999999996 5.8H12.200000000000001" stroke="#6e4030" stroke-width=".9"/><rect x="0.4" y=".2" width="5.2" height="5.2" fill="url(#gP)"/><rect x="6.4" y=".2" width="5.2" height="5.2" fill="url(#gP)"/><rect x="0.4" y="6.2" width="5.2" height="5.2" fill="url(#gP)"/><rect x="6.4" y="6.2" width="5.2" height="5.2" fill="url(#gP)"/><rect x="6.6" y="6.8" width="2.4" height="6.6" fill="#ffffff"/><rect x="8.2" y="6.2" width="4.6" height="7.2" rx="1" fill="url(#gR)"/><rect x="9.2" y="7.800000000000001" width="2" height="1" fill="#fff3cf"/><rect x="9.2" y="8.8" width="1" height="3" fill="#fff3cf"/></svg><span id="r4" class="t" style="left:77.6px;letter-spacing:0.144px;">br.ies.aps.jogooito.modelo</span></div>
<div class="row" style="top:148.5px"><svg class="ic" style="left:44.8px;top:6px" width="7" height="11"><path d="M0 0L6.2 5.5L0 11Z" fill="#a9a9a9"/></svg><svg class="ic" style="left:59.4px;top:6px" width="16" height="16" viewBox="0 0 16 16"><path d="M6.0 -.4V12.2M-0.19999999999999996 5.8H12.200000000000001" stroke="#6e4030" stroke-width=".9"/><rect x="0.4" y=".2" width="5.2" height="5.2" fill="url(#gP)"/><rect x="6.4" y=".2" width="5.2" height="5.2" fill="url(#gP)"/><rect x="0.4" y="6.2" width="5.2" height="5.2" fill="url(#gP)"/><rect x="6.4" y="6.2" width="5.2" height="5.2" fill="url(#gP)"/><rect x="6.6" y="6.8" width="2.4" height="6.6" fill="#ffffff"/><rect x="8.2" y="6.2" width="4.6" height="7.2" rx="1" fill="url(#gR)"/><rect x="9.2" y="7.800000000000001" width="2" height="1" fill="#fff3cf"/><rect x="9.2" y="8.8" width="1" height="3" fill="#fff3cf"/></svg><span id="r5" class="t" style="left:77.6px;letter-spacing:0.172px;">br.ies.aps.jogooito.modelo.DAO</span></div>
<div class="row" style="top:171.5px"><svg class="ic" style="left:44.8px;top:6px" width="7" height="11"><path d="M0 0L6.2 5.5L0 11Z" fill="#a9a9a9"/></svg><svg class="ic" style="left:56px;top:6px" width="18" height="16" viewBox="0 0 18 16"><path d="M9.399999999999999 -.4V12.2M3.1999999999999997 5.8H15.600000000000001" stroke="#6e4030" stroke-width=".9"/><rect x="3.8" y=".2" width="5.2" height="5.2" fill="url(#gP)"/><rect x="9.8" y=".2" width="5.2" height="5.2" fill="url(#gP)"/><rect x="3.8" y="6.2" width="5.2" height="5.2" fill="url(#gP)"/><rect x="9.8" y="6.2" width="5.2" height="5.2" fill="url(#gP)"/><path d="M3.5 5.4Q4.8 5.4 5.4 7.2L6.9 11.600000000000001Q7.3 13.6 5.6 13.6H1.4Q-0.3 13.6 0.1 11.600000000000001L1.6 7.2Q2.2 5.4 3.5 5.4Z" fill="url(#gW)"/><rect x="3" y="7.6000000000000005" width="1" height="3.2" fill="#1a1000"/><rect x="3" y="11.4" width="1" height="1.1" fill="#1a1000"/><rect x="10" y="6.8" width="2.4" height="6.6" fill="#ffffff"/><rect x="11.6" y="6.2" width="4.6" height="7.2" rx="1" fill="url(#gR)"/><rect x="12.6" y="7.800000000000001" width="2" height="1" fill="#fff3cf"/><rect x="12.6" y="8.8" width="1" height="3" fill="#fff3cf"/></svg><span id="r6" class="t" style="left:77.6px;letter-spacing:0.057px;">br.ies.aps.jogooito.view.swing.botao</span></div>
<div class="row" style="top:194.5px"><svg class="ic" style="left:44.8px;top:6px" width="7" height="11"><path d="M0 0L6.2 5.5L0 11Z" fill="#a9a9a9"/></svg><svg class="ic" style="left:59.4px;top:6px" width="16" height="16" viewBox="0 0 16 16"><path d="M6.0 -.4V12.2M-0.19999999999999996 5.8H12.200000000000001" stroke="#6e4030" stroke-width=".9"/><rect x="0.4" y=".2" width="5.2" height="5.2" fill="url(#gP)"/><rect x="6.4" y=".2" width="5.2" height="5.2" fill="url(#gP)"/><rect x="0.4" y="6.2" width="5.2" height="5.2" fill="url(#gP)"/><rect x="6.4" y="6.2" width="5.2" height="5.2" fill="url(#gP)"/><rect x="6.6" y="6.8" width="2.4" height="6.6" fill="#ffffff"/><rect x="8.2" y="6.2" width="4.6" height="7.2" rx="1" fill="url(#gR)"/><rect x="9.2" y="7.800000000000001" width="2" height="1" fill="#fff3cf"/><rect x="9.2" y="8.8" width="1" height="3" fill="#fff3cf"/></svg><span id="r7" class="t" style="left:77.6px;letter-spacing:0.018px;">br.ies.aps.jogooito.view.swing.tela</span></div>
<div class="row" style="top:217.5px"><svg class="ic" style="left:24px;top:8.5px" width="11" height="6"><path d="M0 0H11L5.5 6Z" fill="#a9a9a9"/></svg><svg class="ic" style="left:38.6px;top:4.6px" width="17" height="15" viewBox="0 0 17 15"><path d="M2.4 3H7.4L8.2 4.2H11.4V11H2.4Z" fill="url(#gF)" stroke="#e2bd78" stroke-width=".5"/><path d="M3.4 2H7" stroke="#fff3cf" stroke-width="1.2"/><path d="M6.6 1.8H14.4M6.6 4.4H14.4M8.2 0V6.2M10.8 0V6.2M13.4 .4V6.2" stroke="#6e3f2a" stroke-width=".8"/><rect x="8.6" y="2.2" width="1.8" height="1.8" fill="#f3d9a8"/><rect x="11.2" y="2.2" width="1.8" height="1.8" fill="#f3d9a8"/><rect x="8.6" y="4.8" width="1.8" height="1.4" fill="#f3d9a8"/><rect x="11.2" y="4.8" width="1.8" height="1.4" fill="#f3d9a8"/><path d="M9 7.4H16L14.6 9H9Z" fill="#f6d58c"/><path d="M3.5 6.4Q4.8 6.4 5.4 8.200000000000001L6.9 12.600000000000001Q7.3 14.6 5.6 14.6H1.4Q-0.3 14.6 0.1 12.600000000000001L1.6 8.200000000000001Q2.2 6.4 3.5 6.4Z" fill="url(#gW)"/><rect x="3" y="8.600000000000001" width="1" height="3.2" fill="#1a1000"/><rect x="3" y="12.4" width="1" height="1.1" fill="#1a1000"/><rect x="9.8" y="8.6" width="2.4" height="6.6" fill="#ffffff"/><rect x="11.4" y="8" width="4.6" height="7.2" rx="1" fill="url(#gR)"/><rect x="12.4" y="9.6" width="2" height="1" fill="#fff3cf"/><rect x="12.4" y="10.6" width="1" height="3" fill="#fff3cf"/></svg><span id="r8" class="t" style="left:59.0px;letter-spacing:0.0px;">test</span></div>
<div class="row" style="top:240.5px"><svg class="ic" style="left:44.8px;top:6px" width="7" height="11"><path d="M0 0L6.2 5.5L0 11Z" fill="#a9a9a9"/></svg><svg class="ic" style="left:59.4px;top:6px" width="16" height="16" viewBox="0 0 16 16"><path d="M6.0 -.4V12.2M-0.19999999999999996 5.8H12.200000000000001" stroke="#6e4030" stroke-width=".9"/><rect x="0.4" y=".2" width="5.2" height="5.2" fill="url(#gP)"/><rect x="6.4" y=".2" width="5.2" height="5.2" fill="url(#gP)"/><rect x="0.4" y="6.2" width="5.2" height="5.2" fill="url(#gP)"/><rect x="6.4" y="6.2" width="5.2" height="5.2" fill="url(#gP)"/><rect x="6.6" y="6.8" width="2.4" height="6.6" fill="#ffffff"/><rect x="8.2" y="6.2" width="4.6" height="7.2" rx="1" fill="url(#gR)"/><rect x="9.2" y="7.800000000000001" width="2" height="1" fill="#fff3cf"/><rect x="9.2" y="8.8" width="1" height="3" fill="#fff3cf"/></svg><span id="r9" class="t" style="left:77.6px;letter-spacing:0.126px;">br.ies.aps.jogooito.controle</span></div>
<div class="row" style="top:263.5px"><svg class="ic" style="left:44.8px;top:6px" width="7" height="11"><path d="M0 0L6.2 5.5L0 11Z" fill="#a9a9a9"/></svg><svg class="ic" style="left:59.4px;top:6px" width="16" height="16" viewBox="0 0 16 16"><path d="M6.0 -.4V12.2M-0.19999999999999996 5.8H12.200000000000001" stroke="#6e4030" stroke-width=".9"/><rect x="0.4" y=".2" width="5.2" height="5.2" fill="url(#gP)"/><rect x="6.4" y=".2" width="5.2" height="5.2" fill="url(#gP)"/><rect x="0.4" y="6.2" width="5.2" height="5.2" fill="url(#gP)"/><rect x="6.4" y="6.2" width="5.2" height="5.2" fill="url(#gP)"/><rect x="6.6" y="6.8" width="2.4" height="6.6" fill="#ffffff"/><rect x="8.2" y="6.2" width="4.6" height="7.2" rx="1" fill="url(#gR)"/><rect x="9.2" y="7.800000000000001" width="2" height="1" fill="#fff3cf"/><rect x="9.2" y="8.8" width="1" height="3" fill="#fff3cf"/></svg><span id="r10" class="t" style="left:77.6px;letter-spacing:0.112px;">br.ies.aps.jogooito.modelo</span></div>
<div class="row" style="top:286.5px"><svg class="ic" style="left:44.8px;top:6px" width="7" height="11"><path d="M0 0L6.2 5.5L0 11Z" fill="#a9a9a9"/></svg><svg class="ic" style="left:56px;top:6px" width="18" height="16" viewBox="0 0 18 16"><path d="M9.399999999999999 -.4V12.2M3.1999999999999997 5.8H15.600000000000001" stroke="#6e4030" stroke-width=".9"/><rect x="3.8" y=".2" width="5.2" height="5.2" fill="url(#gP)"/><rect x="9.8" y=".2" width="5.2" height="5.2" fill="url(#gP)"/><rect x="3.8" y="6.2" width="5.2" height="5.2" fill="url(#gP)"/><rect x="9.8" y="6.2" width="5.2" height="5.2" fill="url(#gP)"/><path d="M3.5 5.4Q4.8 5.4 5.4 7.2L6.9 11.600000000000001Q7.3 13.6 5.6 13.6H1.4Q-0.3 13.6 0.1 11.600000000000001L1.6 7.2Q2.2 5.4 3.5 5.4Z" fill="url(#gW)"/><rect x="3" y="7.6000000000000005" width="1" height="3.2" fill="#1a1000"/><rect x="3" y="11.4" width="1" height="1.1" fill="#1a1000"/><rect x="10" y="6.8" width="2.4" height="6.6" fill="#ffffff"/><rect x="11.6" y="6.2" width="4.6" height="7.2" rx="1" fill="url(#gR)"/><rect x="12.6" y="7.800000000000001" width="2" height="1" fill="#fff3cf"/><rect x="12.6" y="8.8" width="1" height="3" fill="#fff3cf"/></svg><span id="r11" class="t" style="left:77.6px;letter-spacing:0.172px;">br.ies.aps.jogooito.modelo.DAO</span></div>
<div class="row" style="top:309.5px"><svg class="ic" style="left:26.8px;top:6px" width="7" height="11"><path d="M0 0L6.2 5.5L0 11Z" fill="#a9a9a9"/></svg><svg class="ic" style="left:39.6px;top:5.6px" width="16" height="13" viewBox="0 0 16 13"><path d="M.4 2.8H7V4H.4Z" fill="#3b8fe0"/><path d="M1 4.8H9.2V8H1Z" fill="#3fa878"/><path d="M2 5.8H8.4" stroke="#8fd4b0" stroke-width=".9"/><path d="M.2 8.8H10.2V12H.2Z" fill="#d5853f"/><path d="M1 9.8H9.4" stroke="#eab07a" stroke-width=".9"/><path d="M8.4 .9L10.9 .1L15 11.6L12.4 12.4Z" fill="#f2b93a" stroke="#c98a1c" stroke-width=".4"/></svg><span id="r12" class="t" style="left:60.6px;letter-spacing:-0.26px;">JRE System Library <span class="d">[JavaSE-1.8]</span></span></div>
<div class="row" style="top:332.5px"><svg class="ic" style="left:26.8px;top:6px" width="7" height="11"><path d="M0 0L6.2 5.5L0 11Z" fill="#a9a9a9"/></svg><svg class="ic" style="left:39.6px;top:5.6px" width="16" height="13" viewBox="0 0 16 13"><path d="M.4 2.8H7V4H.4Z" fill="#3b8fe0"/><path d="M1 4.8H9.2V8H1Z" fill="#3fa878"/><path d="M2 5.8H8.4" stroke="#8fd4b0" stroke-width=".9"/><path d="M.2 8.8H10.2V12H.2Z" fill="#d5853f"/><path d="M1 9.8H9.4" stroke="#eab07a" stroke-width=".9"/><path d="M8.4 .9L10.9 .1L15 11.6L12.4 12.4Z" fill="#f2b93a" stroke="#c98a1c" stroke-width=".4"/></svg><span id="r13" class="t" style="left:60.0px;letter-spacing:-0.033px;">JUnit 5</span></div>
<div class="row" style="top:355.5px"><svg class="ic" style="left:26.8px;top:6px" width="7" height="11"><path d="M0 0L6.2 5.5L0 11Z" fill="#a9a9a9"/></svg><svg class="ic" style="left:39.6px;top:5.6px" width="16" height="13" viewBox="0 0 16 13"><path d="M.4 2.8H7V4H.4Z" fill="#3b8fe0"/><path d="M1 4.8H9.2V8H1Z" fill="#3fa878"/><path d="M2 5.8H8.4" stroke="#8fd4b0" stroke-width=".9"/><path d="M.2 8.8H10.2V12H.2Z" fill="#d5853f"/><path d="M1 9.8H9.4" stroke="#eab07a" stroke-width=".9"/><path d="M8.4 .9L10.9 .1L15 11.6L12.4 12.4Z" fill="#f2b93a" stroke="#c98a1c" stroke-width=".4"/></svg><span id="r14" class="t" style="left:58.6px;letter-spacing:-0.042px;">Referenced Libraries</span></div>
<div class="row" style="top:378.5px"><svg class="ic" style="left:26.8px;top:6px" width="7" height="11"><path d="M0 0L6.2 5.5L0 11Z" fill="#a9a9a9"/></svg><svg class="ic" style="left:39px;top:4px" width="17" height="16" viewBox="0 0 17 16"><path d="M1.4 3H6L7 4.4H12.6V12H1.4Z" fill="url(#gF)" stroke="#c98d35" stroke-width=".8"/><path d="M1.4 12L4 6.6H15.4L12.6 12Z" fill="#fbe9b8" stroke="#c98d35" stroke-width=".8"/><rect x="8.8" y="8.2" width="2.4" height="6.6" fill="#ffffff"/><rect x="10.4" y="7.6" width="4.6" height="7.2" rx="1" fill="url(#gR)"/><rect x="11.4" y="9.2" width="2" height="1" fill="#fff3cf"/><rect x="11.4" y="10.2" width="1" height="3" fill="#fff3cf"/></svg><span id="r15" class="t" style="left:58.6px;letter-spacing:0.18px;">bibliotecas</span></div>
<div class="row" style="top:401.5px"><svg class="ic" style="left:39px;top:4px" width="17" height="16" viewBox="0 0 17 16"><rect x=".5" y=".5" width="15" height="14.4" rx=".8" fill="#f7f8fa" stroke="#b9c7dc" stroke-width=".9"/><circle cx="8.6" cy="4.2" r="1.9" fill="#e0242a"/><path d="M6 3.4L8.6 .8L11.4 3.6" stroke="#222" stroke-width="1" fill="none"/><path d="M3 8.2L6.8 5.6L12 8L8 10.6Z" fill="#2c2c2c"/><path d="M2.6 11H11.6L10.6 13.6H3.6Z" fill="#4a4a4a"/><path d="M2.4 7.4H5" stroke="#5a6a8a" stroke-width="1"/><rect x="8.8" y="8.2" width="2.4" height="6.6" fill="#ffffff"/><rect x="10.4" y="7.6" width="4.6" height="7.2" rx="1" fill="url(#gR)"/><rect x="11.4" y="9.2" width="2" height="1" fill="#fff3cf"/><rect x="11.4" y="10.2" width="1" height="3" fill="#fff3cf"/></svg><span id="r16" class="t" style="left:58.6px;letter-spacing:-0.22px;">8puzzle.jar</span></div>
<div class="row" style="top:424.5px"><svg class="ic" style="left:42px;top:3.5px" width="13" height="16" viewBox="0 0 13 16"><path d="M.5 .5H7L10.5 4V14.2H.5Z" fill="#fdfdfd" stroke="#d8c48e" stroke-width=".9"/><path d="M7 .5V4H10.5" fill="#efe3bc" stroke="#d8c48e" stroke-width=".6"/><path d="M1.6 5.4H3.4M5.2 5.4H7.2M2.2 5.4L3.6 9.8L4.9 6.4L6.2 9.8L7.6 5.4" stroke="#23408f" stroke-width="1" fill="none"/><path d="M1.6 11.6H6" stroke="#c8d4ea" stroke-width=".8"/><rect x="5.8" y="8.2" width="2.4" height="6.6" fill="#ffffff"/><rect x="7.4" y="7.6" width="4.6" height="7.2" rx="1" fill="url(#gR)"/><rect x="8.4" y="9.2" width="2" height="1" fill="#fff3cf"/><rect x="8.4" y="10.2" width="1" height="3" fill="#fff3cf"/></svg><span id="r17" class="t" style="left:58.6px;letter-spacing:-0.025px;">README.md</span></div>
<div class="row" style="top:447.5px"><svg class="ic" style="left:40.4px;top:4px" width="16" height="16" viewBox="0 0 16 16"><circle cx="7" cy="7.2" r="6.3" fill="#4f9fe4" stroke="#cfe3f6" stroke-width=".7"/><path d="M2.4 4.4Q4 1.6 7.4 1.2Q5 3.4 4.6 6.6Q3 6.6 2.4 4.4Z" fill="#eaf4fc"/><path d="M6.4 3.4Q9.2 2.6 10.2 5Q10.6 7.8 8 8.6Q6 9.8 5.4 7.4Q5.2 5 6.4 3.4Z" fill="#9ccf5a"/><path d="M7.6 4.6Q9 4.6 9 6.2Q8.2 7.2 7.2 6.4Z" fill="#f0dc6a"/><rect x="8" y="8.2" width="2.4" height="6.6" fill="#ffffff"/><rect x="9.6" y="7.6" width="4.6" height="7.2" rx="1" fill="url(#gR)"/><rect x="10.6" y="9.2" width="2" height="1" fill="#fff3cf"/><rect x="10.6" y="10.2" width="1" height="3" fill="#fff3cf"/></svg><span id="r18" class="t" style="left:59.0px;letter-spacing:0.0px;">tela.png</span></div>
</div>
<div id="sash"></div>
<div id="editor"><div class="tabbar"></div><div class="tabline"></div>
<div class="tab" style="left:0;width:113px"><svg class="ic" style="left:7px;top:10px" width="12" height="15" viewBox="0 0 12 15"><path d="M.6 .6H7.6L11 4V14H.6Z" fill="#fbfbf6" stroke="#c9b27a" stroke-width="1"/><path d="M7.6 .6V4H11Z" fill="#e8d8a8"/><path d="M6.8 3.6V8.6Q6.8 10.8 5 10.8Q3.8 10.8 3 10" stroke="#20589a" stroke-width="1.9" fill="none"/></svg><span id="tabmj" class="t" style="left:24.6px;letter-spacing:-0.6px;color:#f1f1f1;font-size:14px">Main.java</span><svg class="ic" style="left:95px;top:12px" width="10" height="10" viewBox="0 0 10 10"><path d="M1.6 1.6L8.4 8.4M8.4 1.6L1.6 8.4" stroke="#020202" stroke-width="3.7" stroke-linecap="square"/><path d="M1.8 1.8L8.2 8.2M8.2 1.8L1.8 8.2" stroke="#283033" stroke-width="1.5" stroke-linecap="square"/></svg></div>
<svg class="ic" style="left:1399px;top:11px" width="10" height="4" viewBox="0 0 10 4"><rect x=".5" y=".5" width="9" height="3" fill="#262a2c" stroke="#8f8f8f" stroke-width="1"/></svg><svg class="ic" style="left:1426px;top:11px" width="10" height="10" viewBox="0 0 10 10"><rect x=".5" y=".5" width="9" height="9" fill="#262a2c" stroke="#8f8f8f" stroke-width="1"/><path d="M1 2.5H9" stroke="#8f8f8f" stroke-width="1"/></svg>
<div style="left:0;top:33px;width:12px;height:17px;background:repeating-conic-gradient(#2480b0 0% 25%,#1b5875 0% 50%) 0 0/2px 2px"></div>
<div style="left:40px;top:237px;width:1398px;height:17px;background:#373737"></div>
<div style="left:680px;top:33px;width:1px;height:787px;background:#ff0000"></div>
<pre class="ln">1
2
3
4
5
6
7
8
9
10
11
12
13</pre>
<svg class="ic" style="left:28px;top:138px" width="9" height="9"><circle cx="4.5" cy="4.5" r="4.5" fill="#b9bdc2"/><path d="M2 4.5H7" stroke="#2f2f2f" stroke-width="1.2"/></svg>
<pre class="code"><span class="k">package</span> br.ies.aps.jogooito;

<span class="k">import</span> br.ies.aps.jogooito.view.swing.tela.TelaPrincipal;

<span class="k">public</span> <span class="k">class</span> <span class="c">Main</span> {

    <span class="k">public</span> <span class="k">static</span> <span class="k">void</span> main(String[] args) {
        <span class="c">TelaPrincipal</span> <span class="v">gameSwing</span> = <span class="k">new</span> TelaPrincipal();
        <span class="v">gameSwing</span>.<span class="m">IniciaJogo</span>();
    }

}
</pre>
</div><div id="ebottom"></div>
<div id="game"><div id="gtitle"><span id="gtitle_t" class="t" style="left:266.0px;letter-spacing:-0.325px;">Jogo do 8</span>
<svg class="ic" style="left:510px;top:19.5px" width="8" height="3"><rect width="8.4" height="2.6" fill="#f2f2f2"/></svg>
<svg class="ic" style="left:544px;top:14px" width="9" height="9"><rect x="1" y="1" width="6.4" height="6.4" fill="none" stroke="#f2f2f2" stroke-width="2"/></svg>
<svg class="ic" style="left:578px;top:13.5px" width="9" height="9"><path d="M.8 .8L7.8 7.8M7.8 .8L.8 7.8" stroke="#f2f2f2" stroke-width="2.1"/></svg>
</div>
<div class="cell" style="left:0px;top:37px">1</div>
<div class="cell" style="left:200px;top:37px">2</div>
<div class="cell" style="left:400px;top:37px">3</div>
<div class="cell" style="left:0px;top:191px">4</div>
<div class="cell" style="left:200px;top:191px">5</div>
<div class="cell" style="left:400px;top:191px">6</div>
<div class="cell" style="left:0px;top:345px">7</div>
<div class="cell" style="left:200px;top:345px">8</div>
<div class="cell" style="left:400px;top:345px">0</div>
<span id="gl1" class="gl" style="left:58.5px;letter-spacing:0.368px;top:518px">Jogador: guisalmeida</span>
<span id="gl2" class="gl" style="left:59.5px;letter-spacing:0.262px;top:543px">Venceu o jogo com 22 jogadas!!</span>
<div class="btn" style="left:453px;top:512px;padding:1px 2px 0 0">↑</div>
<div class="btn" style="left:409px;top:537px;padding-top:1px">←</div>
<div class="btn" style="left:497px;top:537px;padding-top:1px">→</div>
<div class="btn" style="left:453px;top:562px;padding:1px 2px 0 0">↓</div>
</div>
</body></html>
